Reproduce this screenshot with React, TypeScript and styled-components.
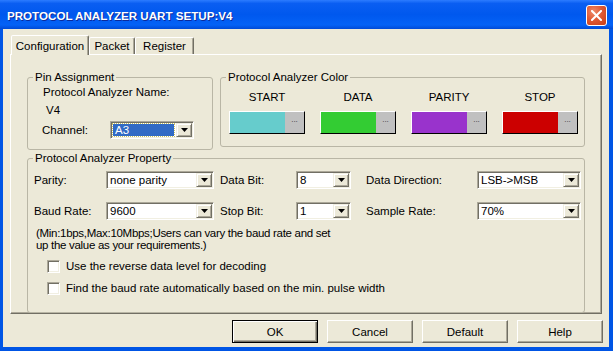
import styled, { createGlobalStyle } from 'styled-components'

const GlobalStyle = createGlobalStyle`
  html, body {
    margin: 0;
    padding: 0;
    background: #ffffff;
  }
  body {
    font-family: 'Liberation Sans', Arial, sans-serif;
    font-size: 11.5px;
    color: #000;
  }
  * {
    box-sizing: border-box;
  }
`

const Window = styled.div`
  width: 613px;
  height: 351px;
  background: #0055e5;
  display: flex;
  flex-direction: column;
`

const TitleBar = styled.div`
  height: 29px;
  flex: none;
  display: flex;
  align-items: center;
  justify-content: space-between;
  padding: 2px 6px 0 7px;
  background: linear-gradient(#2c7cff 0%, #0a5ef2 12%, #0058ee 50%, #0462f6 86%, #004ad6 100%);
`

const Title = styled.span`
  color: #fff;
  font-weight: bold;
  font-size: 11.6px;
  text-shadow: 1px 1px 0 #0b2a9c;
`

const CloseButton = styled.div`
  width: 21px;
  height: 21px;
  border: 1px solid #fff;
  border-radius: 3px;
  background: radial-gradient(circle at 35% 30%, #ee8b6a 0%, #e05a35 45%, #c83d17 100%);
  display: grid;
  place-items: center;
`

const Client = styled.div`
  flex: 1;
  margin: 0 4px 4px 3px;
  background: #ece9d8;
  display: flex;
  flex-direction: column;
  padding: 6px 7px 0 7px;
`

const TabStrip = styled.div`
  height: 19px;
  display: flex;
  align-items: flex-end;
  padding-left: 1px;
`

const Tab = styled.div<{ $active?: boolean; $w: number }>`
  width: ${p => p.$w}px;
  height: ${p => (p.$active ? 20 : 17)}px;
  margin-bottom: ${p => (p.$active ? -1 : 0)}px;
  position: relative;
  z-index: ${p => (p.$active ? 1 : 0)};
  display: flex;
  align-items: center;
  justify-content: center;
  background: #ece9d8;
  border: 1px solid;
  border-bottom: none;
  border-color: #fff #716f64 transparent #fff;
  border-radius: 2px 2px 0 0;
  box-shadow: inset -1px 0 0 #aca899;
`

const Panel = styled.div`
  height: 260px;
  border: 1px solid;
  border-color: #fff #716f64 #716f64 #fff;
  box-shadow: inset -1px -1px 0 #aca899;
  padding: 15px 16px 0 16px;
  display: flex;
  flex-direction: column;
  gap: 1px;
`

const TopRow = styled.div`
  display: flex;
  gap: 7px;
  align-items: flex-start;
`

const GroupBox = styled.fieldset<{ $w?: number; $h: number }>`
  margin: 0;
  padding: 0;
  min-width: 0;
  width: ${p => (p.$w ? `${p.$w}px` : 'auto')};
  flex: ${p => (p.$w ? 'none' : '1')};
  height: ${p => p.$h}px;
  border: 1px solid #b9b6a5;
  border-radius: 3px;
`

const GroupTitle = styled.legend`
  margin-left: 5px;
  padding: 0 2px;
  height: 14px;
  line-height: 14px;
`

const PinBody = styled.div`
  display: flex;
  flex-direction: column;
  padding: 1px 0 0 15px;
`

const TextLine = styled.div<{ $indent?: number; $mt?: number }>`
  line-height: 14px;
  padding-left: ${p => p.$indent ?? 0}px;
  margin-top: ${p => p.$mt ?? 0}px;
`

const ChannelRow = styled.div`
  margin: 4px 0 0 -1px;
  display: grid;
  grid-template-columns: 68px 84px;
  align-items: center;
`

const ColorGrid = styled.div`
  margin-top: 6px;
  padding-left: 8px;
  display: grid;
  grid-template-columns: repeat(4, 76px);
  column-gap: 15px;
  row-gap: 7px;
`

const ColorLabel = styled.div`
  text-align: center;
  line-height: 14px;
`

const Swatch = styled.div`
  display: flex;
  height: 23px;
  border: 1px solid;
  border-color: #fff #000 #000 #fff;
`

const SwatchColor = styled.div<{ $c: string }>`
  flex: 1;
  background: ${p => p.$c};
`

const SwatchButton = styled.div`
  width: 19px;
  background: #c0c0c0;
  display: flex;
  align-items: center;
  justify-content: center;
  font-size: 8px;
  line-height: 8px;
  padding-bottom: 5px;
  color: #333;
`

const PropGrid = styled.div`
  margin-top: 6px;
  padding-left: 6px;
  display: grid;
  grid-template-columns: 72px 108px 82px 55px 126px 104px;
  grid-auto-rows: 18px;
  row-gap: 13px;
  align-items: center;
`

const FieldLabel = styled.div<{ $pl?: number }>`
  padding-left: ${p => p.$pl ?? 0}px;
  line-height: 14px;
  white-space: nowrap;
`

const ComboBox = styled.div<{ $w: number }>`
  width: ${p => p.$w}px;
  height: 18px;
  display: flex;
  background: #fff;
  border: 1px solid;
  border-color: #aca899 #fff #fff #aca899;
  box-shadow: inset 1px 1px 0 #716f64, inset -1px -1px 0 #f1efe2;
  padding: 1px;
`

const ComboValue = styled.div<{ $selected?: boolean }>`
  flex: 1;
  display: flex;
  align-items: center;
  padding-left: 2px;
  margin: ${p => (p.$selected ? '1px 2px 1px 1px' : '0')};
  background: ${p => (p.$selected ? '#316ac5' : 'transparent')};
  color: ${p => (p.$selected ? '#fff' : '#000')};
  outline: ${p => (p.$selected ? '1px dotted #c8c060' : 'none')};
  line-height: 14px;
  white-space: nowrap;
  overflow: hidden;
`

const ArrowButton = styled.div`
  width: 16px;
  display: grid;
  place-items: center;
  background: #ece9d8;
  border: 1px solid;
  border-color: #f1efe2 #716f64 #716f64 #f1efe2;
  box-shadow: inset 1px 1px 0 #fff, inset -1px -1px 0 #aca899;
`

const Note = styled.div`
  margin-top: 7px;
  padding-left: 8px;
  line-height: 12px;
  letter-spacing: -0.3px;
`

const CheckList = styled.div`
  margin-top: 7px;
  padding-left: 19px;
  display: flex;
  flex-direction: column;
  gap: 6px;
`

const CheckRow = styled.div`
  height: 16px;
  display: flex;
  align-items: center;
  gap: 6px;
`

const CheckBox = styled.div`
  width: 13px;
  height: 13px;
  background: #fff;
  border: 1px solid;
  border-color: #aca899 #fff #fff #aca899;
  box-shadow: inset 1px 1px 0 #716f64, inset -1px -1px 0 #f1efe2;
`

const ButtonRow = styled.div`
  display: flex;
  justify-content: flex-end;
  gap: 9px;
  margin: 6px -1px 0 0;
`

const Button = styled.div<{ $default?: boolean }>`
  width: 86px;
  height: 23px;
  display: flex;
  align-items: center;
  justify-content: center;
  background: #ece9d8;
  border: 1px solid;
  border-color: ${p => (p.$default ? '#000' : '#fff #716f64 #716f64 #fff')};
  box-shadow: ${p =>
    p.$default
      ? 'inset 1px 1px 0 #fff, inset -1px -1px 0 #716f64, inset -2px -2px 0 #aca899'
      : 'inset -1px -1px 0 #aca899'};
`

function DownArrow() {
  return (
    <svg width="7" height="4" viewBox="0 0 7 4">
      <polygon points="0,0 7,0 3.5,4" fill="#000" />
    </svg>
  )
}

function Combo({ w, value, selected }: { w: number; value: string; selected?: boolean }) {
  return (
    <ComboBox $w={w}>
      <ComboValue $selected={selected}>{value}</ComboValue>
      <ArrowButton>
        <DownArrow />
      </ArrowButton>
    </ComboBox>
  )
}

const colors = [
  { name: 'START', c: '#66cccc' },
  { name: 'DATA', c: '#33cc33' },
  { name: 'PARITY', c: '#9933cc' },
  { name: 'STOP', c: '#cc0000' },
]

export default function App() {
  return (
    <>
      <GlobalStyle />
      <Window>
        <TitleBar>
          <Title>PROTOCOL ANALYZER UART SETUP:V4</Title>
          <CloseButton>
            <svg width="11" height="11" viewBox="0 0 11 11">
              <path d="M1 1 L10 10 M10 1 L1 10" stroke="#fff" strokeWidth="2" strokeLinecap="square" />
            </svg>
          </CloseButton>
        </TitleBar>
        <Client>
          <TabStrip>
            <Tab $active $w={78}>Configuration</Tab>
            <Tab $w={46}>Packet</Tab>
            <Tab $w={59}>Register</Tab>
          </TabStrip>
          <Panel>
            <TopRow>
              <GroupBox $w={186} $h={80}>
                <GroupTitle>Pin Assignment</GroupTitle>
                <PinBody>
                  <TextLine>Protocol Analyzer Name:</TextLine>
                  <TextLine $indent={3} $mt={4}>V4</TextLine>
                  <ChannelRow>
                    <FieldLabel>Channel:</FieldLabel>
                    <Combo w={84} value="A3" selected />
                  </ChannelRow>
                </PinBody>
              </GroupBox>
              <GroupBox $h={77}>
                <GroupTitle>Protocol Analyzer Color</GroupTitle>
                <ColorGrid>
                  {colors.map(c => (
                    <ColorLabel key={c.name}>{c.name}</ColorLabel>
                  ))}
                  {colors.map(c => (
                    <Swatch key={c.name}>
                      <SwatchColor $c={c.c} />
                      <SwatchButton>...</SwatchButton>
                    </Swatch>
                  ))}
                </ColorGrid>
              </GroupBox>
            </TopRow>
            <GroupBox $h={149}>
              <GroupTitle>Protocol Analyzer Property</GroupTitle>
              <PropGrid>
                <FieldLabel>Parity:</FieldLabel>
                <Combo w={108} value="none parity" />
                <FieldLabel $pl={6}>Data Bit:</FieldLabel>
                <Combo w={55} value="8" />
                <FieldLabel $pl={15}>Data Direction:</FieldLabel>
                <Combo w={104} value="LSB->MSB" />
                <FieldLabel>Baud Rate:</FieldLabel>
                <Combo w={108} value="9600" />
                <FieldLabel $pl={6}>Stop Bit:</FieldLabel>
                <Combo w={55} value="1" />
                <FieldLabel $pl={15}>Sample Rate:</FieldLabel>
                <Combo w={104} value="70%" />
              </PropGrid>
              <Note>
                (Min:1bps,Max:10Mbps;Users can vary the baud rate and set
                <br />
                up the value as your requirements.)
              </Note>
              <CheckList>
                <CheckRow>
                  <CheckBox />
                  <span>Use the reverse data level for decoding</span>
                </CheckRow>
                <CheckRow>
                  <CheckBox />
                  <span>Find the baud rate automatically based on the min. pulse width</span>
                </CheckRow>
              </CheckList>
            </GroupBox>
          </Panel>
          <ButtonRow>
            <Button $default>OK</Button>
            <Button>Cancel</Button>
            <Button>Default</Button>
            <Button>Help</Button>
          </ButtonRow>
        </Client>
      </Window>
    </>
  )
}
